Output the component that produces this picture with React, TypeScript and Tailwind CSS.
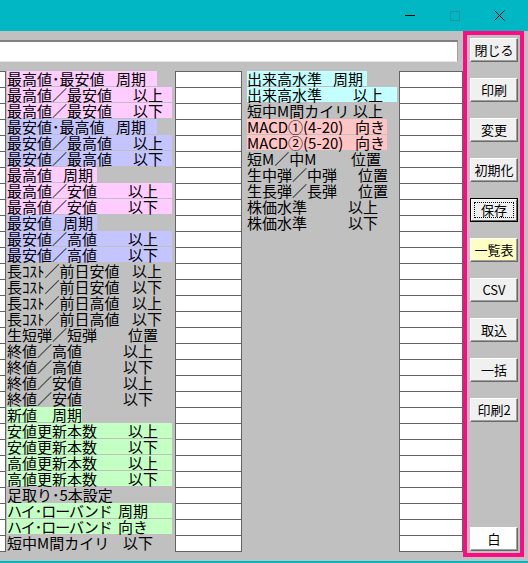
import React from "react";

type Row = { t: string; s?: string; w?: string; bg?: string; x?: string };

const PINK = "bg-[#ffccff]";
const BLUE = "bg-[#c4c4ff]";
const GREEN = "bg-[#c4ffc4]";

const LEFT_ROWS: Row[] = [
  { t: "最高値･最安値", s: "周期", w: "w-[109px]", bg: `w-[150px] ${PINK}` },
  { t: "最高値／最安値", s: "以上", w: "w-[126px]", bg: `w-[165px] ${PINK}` },
  { t: "最高値／最安値", s: "以下", w: "w-[126px]", bg: `w-[165px] ${PINK}` },
  { t: "最安値･最高値", s: "周期", w: "w-[109px]", bg: `w-[150px] ${BLUE}` },
  { t: "最安値／最高値", s: "以上", w: "w-[126px]", bg: `w-[165px] ${BLUE}` },
  { t: "最安値／最高値", s: "以下", w: "w-[126px]", bg: `w-[165px] ${BLUE}` },
  { t: "最高値", s: "周期", w: "w-[56px]", bg: `w-[90px] ${PINK}` },
  { t: "最高値／安値", s: "以上", w: "w-[121px]", bg: `w-[165px] ${PINK}` },
  { t: "最高値／安値", s: "以下", w: "w-[121px]", bg: `w-[165px] ${PINK}` },
  { t: "最安値", s: "周期", w: "w-[56px]", bg: `w-[90px] ${BLUE}` },
  { t: "最安値／高値", s: "以上", w: "w-[121px]", bg: `w-[165px] ${BLUE}` },
  { t: "最安値／高値", s: "以下", w: "w-[121px]", bg: `w-[165px] ${BLUE}` },
  { t: "長ｺｽﾄ／前日安値", s: "以上", w: "w-[125px]" },
  { t: "長ｺｽﾄ／前日安値", s: "以下", w: "w-[125px]" },
  { t: "長ｺｽﾄ／前日高値", s: "以上", w: "w-[125px]" },
  { t: "長ｺｽﾄ／前日高値", s: "以下", w: "w-[125px]" },
  { t: "生短弾／短弾", s: "位置", w: "w-[121px]" },
  { t: "終値／高値", s: "以上", w: "w-[116px]" },
  { t: "終値／高値", s: "以下", w: "w-[116px]" },
  { t: "終値／安値", s: "以上", w: "w-[116px]" },
  { t: "終値／安値", s: "以下", w: "w-[116px]" },
  { t: "新値", s: "周期", w: "w-[45px]", bg: `w-[75px] ${GREEN}` },
  { t: "安値更新本数", s: "以上", w: "w-[121px]", bg: `w-[165px] ${GREEN}` },
  { t: "安値更新本数", s: "以下", w: "w-[121px]", bg: `w-[165px] ${GREEN}` },
  { t: "高値更新本数", s: "以上", w: "w-[121px]", bg: `w-[165px] ${GREEN}` },
  { t: "高値更新本数", s: "以下", w: "w-[121px]", bg: `w-[165px] ${GREEN}` },
  { t: "足取り･5本設定" },
  { t: "ハイ･ローバンド", s: "周期", w: "w-[111px]", bg: `w-[165px] ${GREEN}`, x: "tracking-[-1px]" },
  { t: "ハイ･ローバンド", s: "向き", w: "w-[111px]", bg: `w-[165px] ${GREEN}`, x: "tracking-[-1px]" },
  { t: "短中M間カイリ", s: "以下", w: "w-[116px]" },
];

const RIGHT_ROWS: Row[] = [
  { t: "出来高水準", s: "周期", w: "w-[86px]", bg: "w-[120px] bg-[#c4ffff]" },
  { t: "出来高水準", s: "以上", w: "w-[106px]", bg: "w-[150px] bg-[#c4ffff]" },
  { t: "短中M間カイリ", s: "以上", w: "w-[106px]" },
  { t: "MACD①(4-20)", s: "向き", w: "w-[108px]", bg: "w-[140px] bg-[#ffc4c4]" },
  { t: "MACD②(5-20)", s: "向き", w: "w-[108px]", bg: "w-[140px] bg-[#ffc4c4]" },
  { t: "短M／中M", s: "位置", w: "w-[104px]" },
  { t: "生中弾／中弾", s: "位置", w: "w-[111px]" },
  { t: "生長弾／長弾", s: "位置", w: "w-[111px]" },
  { t: "株価水準", s: "以上", w: "w-[101px]" },
  { t: "株価水準", s: "以下", w: "w-[101px]" },
];

const ROW_COUNT = 30;

function Label({ row }: { row: Row }) {
  return (
    <div className="h-[16px]">
      <div className={`flex h-[15px] items-center whitespace-nowrap leading-[15px] ${row.bg ?? ""}`}>
        <span className={`shrink-0 ${row.w ?? ""} ${row.x ?? ""}`}>{row.t}</span>
        {row.s && <span className="shrink-0">{row.s}</span>}
      </div>
    </div>
  );
}

function Cells({ width }: { width: string }) {
  return (
    <div className={`flex shrink-0 flex-col border-x border-t border-[#646464] ${width}`}>
      {Array.from({ length: ROW_COUNT }).map((_, i) => (
        <div key={i} className="h-[16px] border-b border-[#646464] bg-white" />
      ))}
    </div>
  );
}

function SideButton({ label, tone = "default" }: { label: string; tone?: "default" | "yellow" | "white" | "focus" }) {
  const bg = tone === "yellow" ? "bg-[#ffffc4]" : tone === "white" ? "bg-white" : "bg-[#f0f0f0]";
  if (tone === "focus") {
    return (
      <div className="h-[24px] w-[48px] border border-black">
        <div className="flex h-full w-full items-center justify-center border border-t-white border-l-white border-r-[#696969] border-b-[#696969] bg-[#f0f0f0] p-[2px]">
          <span className="flex h-full w-full items-center justify-center border border-dotted border-black">{label}</span>
        </div>
      </div>
    );
  }
  return (
    <div
      className={`flex h-[24px] w-[48px] items-center justify-center border border-t-white border-l-white border-r-[#696969] border-b-[#696969] shadow-[inset_-1px_-1px_0_#a0a0a0] ${bg}`}
    >
      {label}
    </div>
  );
}

export default function App() {
  return (
    <div className="flex h-[563px] w-[528px] flex-col overflow-hidden bg-[#c0c0c0] font-['Noto_Sans_CJK_JP',sans-serif] text-black">
      {/* title bar */}
      <div className="flex h-[31px] shrink-0 items-center justify-end bg-[#00b7c3] pr-[6px]">
        <div className="flex h-full w-[45px] items-center justify-center">
          <div className="h-px w-[10px] bg-black" />
        </div>
        <div className="flex h-full w-[45px] items-center justify-center">
          <div className="h-[10px] w-[10px] border border-[#28939b]" />
        </div>
        <div className="flex h-full w-[45px] items-center justify-center">
          <svg width="11" height="11" viewBox="0 0 11 11">
            <path d="M0.5 0.5 L10.5 10.5 M10.5 0.5 L0.5 10.5" stroke="#000" strokeWidth="1" />
          </svg>
        </div>
      </div>

      {/* body */}
      <div className="flex flex-1 border-b-2 border-[#00b7c3]">
        <div className="flex w-[463px] shrink-0 flex-col">
          <div className="mt-[9px] h-[22px] w-[458px] border-t-2 border-r border-b border-t-[#808080] border-r-[#a0a0a0] border-b-[#e3e3e3] bg-white" />
          <div className="mt-[9px] flex text-[15px]">
            <div className="flex w-[6px] shrink-0 flex-col border-t border-r border-[#646464]">
              {Array.from({ length: ROW_COUNT }).map((_, i) => (
                <div key={i} className="h-[16px] border-b border-[#646464] bg-white" />
              ))}
            </div>
            <div className="ml-px flex w-[168px] shrink-0 flex-col">
              {LEFT_ROWS.map((r, i) => (
                <Label key={i} row={r} />
              ))}
            </div>
            <Cells width="w-[67px]" />
            <div className="ml-[5px] flex w-[152px] shrink-0 flex-col">
              {RIGHT_ROWS.map((r, i) => (
                <Label key={i} row={r} />
              ))}
            </div>
            <Cells width="w-[64px]" />
          </div>
        </div>

        {/* button panel */}
        <div className="flex h-[526px] w-[61px] shrink-0 flex-col gap-[16px] border-4 border-[#ff0a85] pt-[3px] pb-[2px] pl-[3px] text-[13px]">
          <SideButton label="閉じる" />
          <SideButton label="印刷" />
          <SideButton label="変更" />
          <SideButton label="初期化" />
          <SideButton label="保存" tone="focus" />
          <SideButton label="一覧表" tone="yellow" />
          <SideButton label="CSV" />
          <SideButton label="取込" />
          <SideButton label="一括" />
          <SideButton label="印刷2" />
          <div className="mt-auto">
            <SideButton label="白" tone="white" />
          </div>
        </div>
      </div>
    </div>
  );
}
